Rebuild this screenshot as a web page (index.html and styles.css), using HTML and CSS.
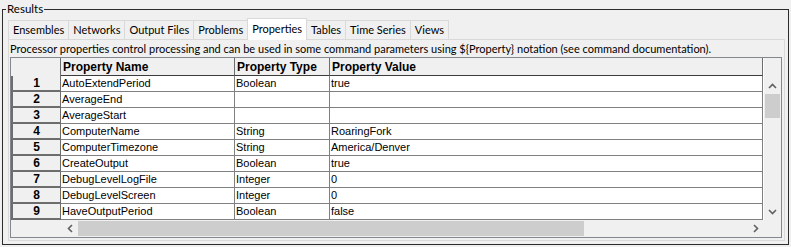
FILE: index.html
```html
<!DOCTYPE html>
<html lang="en">
<head>
    <meta charset="UTF-8">
    <title>Results - Properties</title>
    <link rel="stylesheet" href="styles.css">
</head>
<body>
    <fieldset class="results">
        <legend>Results</legend>

        <div class="tabs">
            <div class="tab">Ensembles</div>
            <div class="tab">Networks</div>
            <div class="tab">Output Files</div>
            <div class="tab">Problems</div>
            <div class="tab selected">Properties</div>
            <div class="tab">Tables</div>
            <div class="tab">Time Series</div>
            <div class="tab">Views</div>
        </div>

        <div class="tab-panel">
            <div class="description">Processor properties control processing and can be used in some command parameters using ${Property} notation (see command documentation).</div>

            <div class="scroll-pane">
                <div class="viewport">
                    <table class="grid">
                        <thead>
                            <tr>
                                <th class="corner"></th>
                                <th class="col-name">Property Name</th>
                                <th class="col-type">Property Type</th>
                                <th class="col-value">Property Value</th>
                            </tr>
                        </thead>
                        <tbody>
                            <tr><th class="num">1</th><td>AutoExtendPeriod</td><td>Boolean</td><td>true</td></tr>
                            <tr><th class="num">2</th><td>AverageEnd</td><td></td><td></td></tr>
                            <tr><th class="num">3</th><td>AverageStart</td><td></td><td></td></tr>
                            <tr><th class="num">4</th><td>ComputerName</td><td>String</td><td>RoaringFork</td></tr>
                            <tr><th class="num">5</th><td>ComputerTimezone</td><td>String</td><td>America/Denver</td></tr>
                            <tr><th class="num">6</th><td>CreateOutput</td><td>Boolean</td><td>true</td></tr>
                            <tr><th class="num">7</th><td>DebugLevelLogFile</td><td>Integer</td><td>0</td></tr>
                            <tr><th class="num">8</th><td>DebugLevelScreen</td><td>Integer</td><td>0</td></tr>
                            <tr><th class="num">9</th><td>HaveOutputPeriod</td><td>Boolean</td><td>false</td></tr>
                        </tbody>
                    </table>
                </div>

                <div class="vscroll">
                    <div class="header-corner"></div>
                    <div class="arrow-btn">
                        <svg width="9" height="6" viewBox="0 0 9 6"><polyline points="1,5 4.5,1.5 8,5" fill="none" stroke="#606060" stroke-width="1.6"/></svg>
                    </div>
                    <div class="vthumb"></div>
                    <div class="track"></div>
                    <div class="arrow-btn">
                        <svg width="9" height="6" viewBox="0 0 9 6"><polyline points="1,1 4.5,4.5 8,1" fill="none" stroke="#606060" stroke-width="1.6"/></svg>
                    </div>
                </div>

                <div class="lower-left"></div>
                <div class="hscroll">
                    <div class="arrow-btn">
                        <svg width="6" height="9" viewBox="0 0 6 9"><polyline points="5,1 1.5,4.5 5,8" fill="none" stroke="#606060" stroke-width="1.6"/></svg>
                    </div>
                    <div class="hthumb"></div>
                    <div class="track"></div>
                    <div class="arrow-btn">
                        <svg width="6" height="9" viewBox="0 0 6 9"><polyline points="1,1 4.5,4.5 1,8" fill="none" stroke="#606060" stroke-width="1.6"/></svg>
                    </div>
                </div>
                <div class="lower-right"></div>
            </div>
        </div>
    </fieldset>
</body>
</html>
```

FILE: styles.css
```css
body {
    margin: 0;
    padding: 2px 0 0 2px;
    width: 791px;
    height: 247px;
    box-sizing: border-box;
    overflow: hidden;
    background-color: #f0f0f0;
    font-family: Lato, "Liberation Sans", sans-serif;
    font-size: 11px;
    color: #000;
}

.results {
    margin: 0;
    width: 787px;
    height: 243px;
    box-sizing: border-box;
    border: 1px solid #2b2b2b;
    padding: 2px 3px 3px 5px;
    display: flex;
    flex-direction: column;
}

.results legend {
    margin-left: -2px;
    padding: 0 1px;
    line-height: 14px;
    font-size: 11.5px;
}

.tabs {
    display: flex;
    align-items: flex-end;
    height: 21px;
}

.tab {
    height: 19px;
    line-height: 18px;
    padding: 0 4px;
    box-sizing: border-box;
    border: 1px solid #d9d9d9;
    border-bottom: none;
    margin-right: -1px;
    background: #f0f0f0;
}

.tab.selected {
    height: 22px;
    line-height: 20px;
    margin-bottom: -1px;
    background: #fff;
    position: relative;
}

.tab-panel {
    flex: 1;
    display: flex;
    flex-direction: column;
    border: 1px solid #d9d9d9;
    min-height: 0;
}

.description {
    height: 17px;
    line-height: 17px;
    padding-left: 1px;
    white-space: nowrap;
}

.scroll-pane {
    flex: 1;
    margin: 0 2px 2px 1px;
    border: 1px solid #828790;
    display: grid;
    grid-template-columns: 50px 1fr 17px;
    grid-template-rows: 1fr 17px;
    min-height: 0;
}

.viewport {
    grid-column: 1 / 3;
    overflow: hidden;
    background: #fff;
}

.grid {
    border-collapse: separate;
    border-spacing: 0;
    table-layout: fixed;
    width: 752px;
    font-family: "Liberation Sans", Arial, sans-serif;
}

.grid thead th {
    height: 18px;
    padding: 0 0 0 2px;
    box-sizing: border-box;
    background: #f0f0f0;
    border-bottom: 1px solid #3c3c3c;
    border-right: 1px solid #6d6d6d;
    text-align: left;
    font-size: 12px;
    font-weight: bold;
    white-space: nowrap;
}

.grid thead th.corner {
    width: 50px;
    border-bottom: none;
}

.grid .col-name {
    width: 174px;
}

.grid .col-type {
    width: 95px;
}

.grid td {
    height: 16px;
    padding: 0 0 0 1px;
    box-sizing: border-box;
    border-right: 1px solid #808080;
    border-bottom: 1px solid #808080;
    font-size: 11px;
    line-height: 15px;
    white-space: nowrap;
    overflow: hidden;
}

.grid th.num {
    height: 16px;
    padding: 0;
    box-sizing: border-box;
    background: #f0f0f0;
    border-left: 2px solid #6d6d6d;
    border-right: 1px solid #6d6d6d;
    border-bottom: 2px solid #6d6d6d;
    font-size: 12px;
    font-weight: bold;
    text-align: center;
    line-height: 14px;
}

.vscroll {
    grid-column: 3;
    grid-row: 1;
    display: flex;
    flex-direction: column;
    background: #f0f0f0;
}

.header-corner {
    height: 19px;
}

.arrow-btn {
    flex: 0 0 17px;
    display: flex;
    align-items: center;
    justify-content: center;
}

.vthumb {
    height: 24px;
    margin: 0 1px;
    background: #cdcdcd;
}

.track {
    flex: 1;
}

.lower-left {
    grid-column: 1;
    grid-row: 2;
    background: #f0f0f0;
}

.hscroll {
    grid-column: 2;
    grid-row: 2;
    display: flex;
    background: #f0f0f0;
}

.hthumb {
    width: 506px;
    margin: 1px 0;
    background: #cdcdcd;
}

.lower-right {
    grid-column: 3;
    grid-row: 2;
    background: #f0f0f0;
}
```
